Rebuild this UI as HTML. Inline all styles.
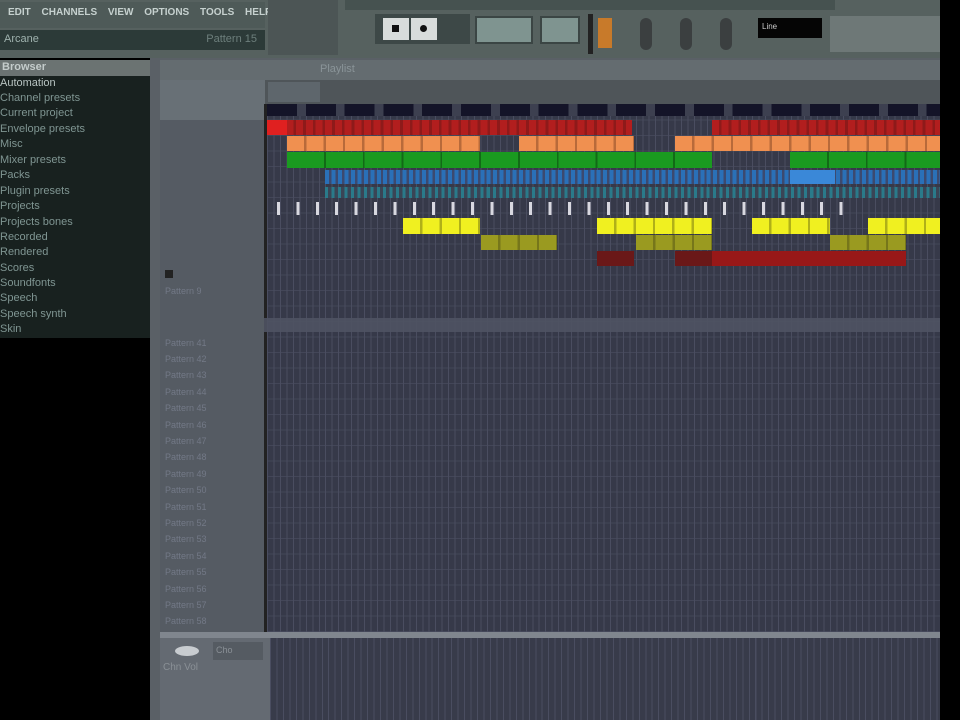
<!DOCTYPE html><html><head><style>
body{margin:0;width:960px;height:720px;overflow:hidden;background:#000;font-family:"Liberation Sans",sans-serif;position:relative}
div{position:absolute;box-sizing:border-box}
.t{color:#7f9592;font-size:11px;left:0;white-space:nowrap}
.p{color:#737987;font-size:9px;left:165px}
</style></head><body>
<!-- top toolbar -->
<div style="left:0;top:0;width:940px;height:58px;background:#56615f"></div>
<div style="left:0;top:2px;width:265px;height:26px;background:#4e5a58"></div>
<div style="left:8px;top:7px;width:258px;height:20px;color:#c6d1cf;font-size:10px;font-weight:bold;white-space:nowrap;word-spacing:8px">EDIT CHANNELS VIEW OPTIONS TOOLS HELP</div>
<div style="left:0;top:30px;width:265px;height:20px;background:#2c3a38;color:#9fb2ae;font-size:11px;padding:3px 4px">Arcane<span style="position:absolute;right:8px;color:#6d7f7c">Pattern 15</span></div>
<div style="left:268px;top:0;width:70px;height:55px;background:#4c5555"></div>
<div style="left:345px;top:0;width:490px;height:10px;background:#465250"></div>
<div style="left:375px;top:14px;width:95px;height:30px;background:#3d4847"></div>
<div style="left:383px;top:18px;width:26px;height:22px;background:#d8dcdb"></div>
<div style="left:411px;top:18px;width:26px;height:22px;background:#d8dcdb"></div>
<div style="left:392px;top:25px;width:7px;height:7px;background:#111"></div>
<div style="left:420px;top:25px;width:7px;height:7px;background:#111;border-radius:50%"></div>
<div style="left:475px;top:16px;width:58px;height:28px;background:#7f9490;border:2px solid #3b4544"></div>
<div style="left:540px;top:16px;width:40px;height:28px;background:#7f9490;border:2px solid #3b4544"></div>
<div style="left:588px;top:14px;width:5px;height:40px;background:#222"></div>
<div style="left:598px;top:18px;width:14px;height:30px;background:#c87a2a"></div>
<div style="left:640px;top:18px;width:12px;height:32px;background:#3b3f40;border-radius:6px"></div>
<div style="left:680px;top:18px;width:12px;height:32px;background:#3b3f40;border-radius:6px"></div>
<div style="left:720px;top:18px;width:12px;height:32px;background:#3b3f40;border-radius:6px"></div>
<div style="left:758px;top:18px;width:64px;height:20px;background:#050505;color:#ccc;font-size:8px;padding:4px">Line</div>
<div style="left:830px;top:16px;width:110px;height:36px;background:#6e7877"></div>
<!-- browser -->
<div style="left:0;top:60px;width:150px;height:16px;background:#6b7372;color:#c4cccb;font-size:11px;font-weight:bold;padding:1px 2px">Browser</div>
<div style="left:0;top:76px;width:150px;height:262px;background:#18211f"></div>
<div class="t" style="top:77px;color:#b8c4c2">Automation</div>
<div class="t" style="top:92px">Channel presets</div>
<div class="t" style="top:107px">Current project</div>
<div class="t" style="top:123px">Envelope presets</div>
<div class="t" style="top:138px">Misc</div>
<div class="t" style="top:154px">Mixer presets</div>
<div class="t" style="top:169px">Packs</div>
<div class="t" style="top:185px">Plugin presets</div>
<div class="t" style="top:200px">Projects</div>
<div class="t" style="top:216px">Projects bones</div>
<div class="t" style="top:231px">Recorded</div>
<div class="t" style="top:246px">Rendered</div>
<div class="t" style="top:262px">Scores</div>
<div class="t" style="top:277px">Soundfonts</div>
<div class="t" style="top:292px">Speech</div>
<div class="t" style="top:308px">Speech synth</div>
<div class="t" style="top:323px">Skin</div>
<div style="left:150px;top:58px;width:790px;height:662px;background:#5a6066"></div>
<!-- playlist header -->
<div style="left:160px;top:60px;width:780px;height:20px;background:#646c70;color:#8a9498;font-size:11px;padding:3px 160px">Playlist</div>
<div style="left:160px;top:80px;width:780px;height:24px;background:#4f5559"></div>
<div style="left:160px;top:80px;width:105px;height:40px;background:#687076"></div>
<div style="left:268px;top:82px;width:52px;height:20px;background:#5e666c"></div>
<div style="left:160px;top:120px;width:105px;height:512px;background:#555b63"></div>
<div class="p" style="top:286px">Pattern 9</div>
<div class="p" style="top:338px">Pattern 41</div>
<div class="p" style="top:354px">Pattern 42</div>
<div class="p" style="top:370px">Pattern 43</div>
<div class="p" style="top:387px">Pattern 44</div>
<div class="p" style="top:403px">Pattern 45</div>
<div class="p" style="top:420px">Pattern 46</div>
<div class="p" style="top:436px">Pattern 47</div>
<div class="p" style="top:452px">Pattern 48</div>
<div class="p" style="top:469px">Pattern 49</div>
<div class="p" style="top:485px">Pattern 50</div>
<div class="p" style="top:502px">Pattern 51</div>
<div class="p" style="top:518px">Pattern 52</div>
<div class="p" style="top:534px">Pattern 53</div>
<div class="p" style="top:551px">Pattern 54</div>
<div class="p" style="top:567px">Pattern 55</div>
<div class="p" style="top:584px">Pattern 56</div>
<div class="p" style="top:600px">Pattern 57</div>
<div class="p" style="top:616px">Pattern 58</div>
<div style="left:165px;top:270px;width:8px;height:8px;background:#222"></div>
<!-- grid -->
<div style="left:264px;top:104px;width:676px;height:528px;background:#363949;background-image:repeating-linear-gradient(90deg,#4a4d60 0 1px,transparent 1px 6.47px),repeating-linear-gradient(180deg,#434658 0 1px,transparent 1px 15.5px);border-left:3px solid #222"></div>
<div style="left:267px;top:104px;width:673px;height:12px;background:repeating-linear-gradient(90deg,#141428 0 30px,#3d4050 30px 38.8px)"></div>
<div style="left:264px;top:318px;width:676px;height:14px;background:#4f5363;opacity:.9"></div>
<!-- clips -->
<div style="left:267px;top:120px;width:365px;height:15px;background:repeating-linear-gradient(90deg,#b21e1e 0 7px,#8e1a1a 7px 9.7px)"></div>
<div style="left:712px;top:120px;width:228px;height:15px;background:repeating-linear-gradient(90deg,#b21e1e 0 7px,#8e1a1a 7px 9.7px)"></div>
<div style="left:267px;top:120px;width:20px;height:15px;background:#e02020"></div>
<div style="left:287px;top:136px;width:193px;height:15px;background:repeating-linear-gradient(90deg,#f09050 0 17px,#b86a3a 17px 19.4px)"></div>
<div style="left:519px;top:136px;width:115px;height:15px;background:repeating-linear-gradient(90deg,#f09050 0 17px,#b86a3a 17px 19.4px)"></div>
<div style="left:675px;top:136px;width:265px;height:15px;background:repeating-linear-gradient(90deg,#f09050 0 17px,#b86a3a 17px 19.4px)"></div>
<div style="left:287px;top:152px;width:425px;height:16px;background:repeating-linear-gradient(90deg,#1a9a20 0 37px,#126a16 37px 38.8px)"></div>
<div style="left:790px;top:152px;width:150px;height:16px;background:repeating-linear-gradient(90deg,#1a9a20 0 37px,#126a16 37px 38.8px)"></div>
<div style="left:325px;top:170px;width:615px;height:14px;background:repeating-linear-gradient(90deg,#2a70b8 0 4px,#3c4a70 4px 6.47px)"></div>
<div style="left:790px;top:170px;width:45px;height:14px;background:#3a88d8"></div>
<div style="left:325px;top:187px;width:615px;height:11px;background:repeating-linear-gradient(90deg,#2a7a8a 0 3px,#3a4556 3px 6.47px)"></div>
<div style="left:277px;top:202px;width:580px;height:13px;background:repeating-linear-gradient(90deg,#d8d8e0 0 3px,transparent 3px 19.4px)"></div>
<div style="left:403px;top:218px;width:77px;height:16px;background:repeating-linear-gradient(90deg,#f0f020 0 17px,#b0b018 17px 19.4px)"></div>
<div style="left:597px;top:218px;width:115px;height:16px;background:repeating-linear-gradient(90deg,#f0f020 0 17px,#b0b018 17px 19.4px)"></div>
<div style="left:752px;top:218px;width:78px;height:16px;background:repeating-linear-gradient(90deg,#f0f020 0 17px,#b0b018 17px 19.4px)"></div>
<div style="left:868px;top:218px;width:72px;height:16px;background:repeating-linear-gradient(90deg,#f0f020 0 17px,#b0b018 17px 19.4px)"></div>
<div style="left:481px;top:235px;width:76px;height:15px;background:repeating-linear-gradient(90deg,#9a9a20 0 17px,#76761a 17px 19.4px)"></div>
<div style="left:636px;top:235px;width:76px;height:15px;background:repeating-linear-gradient(90deg,#9a9a20 0 17px,#76761a 17px 19.4px)"></div>
<div style="left:830px;top:235px;width:76px;height:15px;background:repeating-linear-gradient(90deg,#9a9a20 0 17px,#76761a 17px 19.4px)"></div>
<div style="left:597px;top:251px;width:37px;height:15px;background:#6a1818"></div>
<div style="left:675px;top:251px;width:37px;height:15px;background:#6a1818"></div>
<div style="left:712px;top:251px;width:194px;height:15px;background:#981818"></div>
<!-- bottom -->
<div style="left:160px;top:632px;width:780px;height:6px;background:#80868e"></div>
<div style="left:160px;top:638px;width:110px;height:82px;background:#646a72"></div>
<div style="left:175px;top:646px;width:24px;height:10px;background:#c8ccd0;border-radius:50%"></div>
<div style="left:213px;top:642px;width:50px;height:18px;background:#555b62;color:#8a9096;font-size:9px;padding:3px">Cho</div>
<div style="left:163px;top:662px;color:#8a9096;font-size:10px">Chn Vol</div>
<div style="left:270px;top:638px;width:670px;height:82px;background:#383b4a;background-image:repeating-linear-gradient(90deg,#4a4d60 0 1px,transparent 1px 6.47px)"></div>
</body></html>
